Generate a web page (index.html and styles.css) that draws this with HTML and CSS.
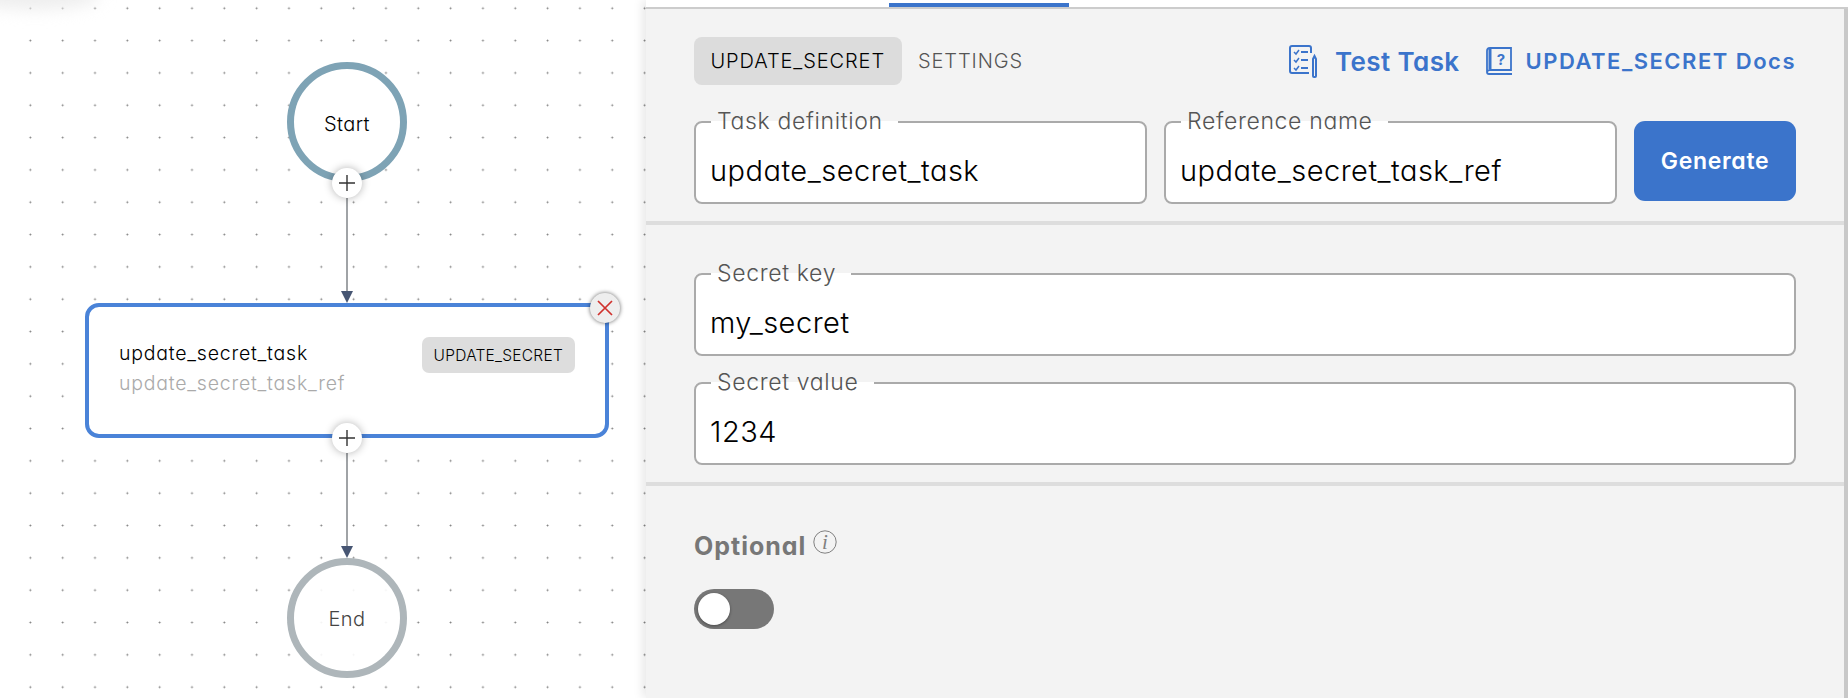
FILE: index.html
```html
<!DOCTYPE html>
<html lang="en">
<head>
<meta charset="utf-8">
<title>UPDATE_SECRET task</title>
<link rel="stylesheet" href="styles.css">
</head>
<body>
<div class="app">
  <div class="canvas">
    <div class="smudge"></div>
    <svg class="edges" width="646" height="698" viewBox="0 0 646 698">
      <line x1="347" y1="198" x2="347" y2="292" stroke="#808488" stroke-width="1.5"/>
      <polygon points="341,291 353,291 347,303" fill="#475673"/>
      <line x1="347" y1="453" x2="347" y2="547" stroke="#808488" stroke-width="1.5"/>
      <polygon points="341,546 353,546 347,558" fill="#475673"/>
    </svg>
    <div class="terminal start">Start</div>
    <div class="terminal end">End</div>
    <div class="task-node">
      <div class="task-names">
        <div class="task-name">update_secret_task</div>
        <div class="task-ref">update_secret_task_ref</div>
      </div>
      <div class="task-badge">UPDATE_SECRET</div>
    </div>
    <button class="add add-one"><svg width="16" height="16" viewBox="0 0 16 16"><path d="M8 0V16M0 8H16" stroke="#333" stroke-width="1.4" fill="none"/></svg></button>
    <button class="add add-two"><svg width="16" height="16" viewBox="0 0 16 16"><path d="M8 0V16M0 8H16" stroke="#333" stroke-width="1.4" fill="none"/></svg></button>
    <button class="remove"><svg width="16" height="16" viewBox="0 0 16 16"><path d="M1 1L15 15M15 1L1 15" stroke="#d0312d" stroke-width="1.7" fill="none"/></svg></button>
  </div>
  <main class="panel">
    <div class="panel-top"><span class="indicator"></span></div>
    <section class="section head">
      <div class="toolbar">
        <div class="tabs">
          <span class="tab active">UPDATE_SECRET</span>
          <span class="tab">SETTINGS</span>
        </div>
        <div class="links">
          <a class="test-link">
            <svg width="29" height="33" viewBox="0 0 29 33" fill="none" stroke="#3b74cb" stroke-width="2">
              <path d="M20 28H3a2 2 0 0 1-2-2V3a2 2 0 0 1 2-2h17a2 2 0 0 1 2 2v5"/>
              <path d="M5 7l2 2 3-4M5 15l2 2 3-4M5 23l2 2 3-4" stroke-width="1.5"/>
              <path d="M12 7h7M12 15h7M12 23h7" stroke-width="2"/>
              <path d="M24 14l1.5-3 1.5 3v17a1 1 0 0 1-1 1h-1a1 1 0 0 1-1-1z"/>
            </svg>
            <span>Test Task</span>
          </a>
          <a class="docs-link">
            <svg width="27" height="28" viewBox="0 0 27 28" fill="none" stroke="#3b74cb">
              <path d="M4 1H25V23H4A3 3 0 0 0 1 25V4A3 3 0 0 1 4 1Z" stroke-width="1.8"/>
              <path d="M4 1V22" stroke-width="3"/>
              <path d="M1 25a2 2 0 0 0 2 2H26" stroke-width="1.8"/>
              <text x="15" y="18" class="docs-mark">?</text>
            </svg>
            <span>UPDATE_SECRET Docs</span>
          </a>
        </div>
      </div>
      <div class="field-row">
        <fieldset class="field"><legend>Task definition</legend><div class="value">update_secret_task</div></fieldset>
        <fieldset class="field"><legend>Reference name</legend><div class="value">update_secret_task_ref</div></fieldset>
        <button class="generate">Generate</button>
      </div>
    </section>
    <section class="section secrets">
      <fieldset class="field"><legend>Secret key</legend><div class="value">my_secret</div></fieldset>
      <fieldset class="field"><legend>Secret value</legend><div class="value">1234</div></fieldset>
    </section>
    <section class="section options">
      <div class="optional-label">
        <span>Optional</span>
        <svg width="24" height="24" viewBox="0 0 24 24" fill="none"><circle cx="12" cy="12" r="11.2" stroke="#808080"/><text x="12" y="18.5" class="info-mark">i</text></svg>
      </div>
      <div class="toggle"><span class="knob"></span></div>
    </section>
  </main>
</div>
</body>
</html>
```
FILE: styles.css
```css
* { box-sizing: border-box; }
html, body { margin: 0; height: 100%; }
body {
  font-family: Inter, "Noto Sans", sans-serif;
  font-feature-settings: "cv11" 1;
  background: #fff;
  color: #000;
  overflow: hidden;
}
.app { display: flex; height: 698px; }

/* Diagram canvas */
.canvas {
  position: relative;
  width: 646px;
  flex: none;
  background-color: #fff;
  background-image: radial-gradient(circle, #7c7c7c 0.7px, transparent 1.2px);
  background-size: 32.33px 32.33px;
  background-position: 14.2px -7.9px;
  overflow: hidden;
}
.smudge {
  position: absolute;
  left: -30px;
  top: -20px;
  width: 130px;
  height: 30px;
  border-radius: 50%;
  background: #eee;
  filter: blur(8px);
}
.edges { position: absolute; left: 0; top: 0; }
.terminal {
  position: absolute;
  left: 287px;
  width: 120px;
  height: 120px;
  display: flex;
  align-items: center;
  justify-content: center;
  border-radius: 50%;
  border: 7px solid;
  background: #fff;
  font-size: 20px;
  font-weight: 350;
  letter-spacing: .02em;
}
.start { top: 62px; border-color: #7ea3b5; padding-top: 3px; }
.end { top: 558px; border-color: #aeb6ba; color: #444; background: rgba(255,255,255,.9); padding-top: 1px; }
.task-node {
  position: absolute;
  left: 85px;
  top: 303px;
  width: 524px;
  height: 135px;
  display: flex;
  justify-content: space-between;
  align-items: flex-start;
  padding: 30px 30px 0 30px;
  border: 4px solid #4a83d8;
  border-radius: 14px;
  background: #fff;
}
.task-name { font-size: 19.5px; line-height: 24px; margin-top: 4px; letter-spacing: .04em; font-weight: 350; }
.task-ref { font-size: 19.5px; line-height: 24px; margin-top: 6px; color: #aaa; letter-spacing: .04em; font-weight: 350; }
.task-badge {
  height: 36px;
  padding: 0 12px;
  display: flex;
  align-items: center;
  border-radius: 7px;
  background: #ddd;
  font-size: 15.5px;
  letter-spacing: .25px;
  font-weight: 350;
}
.add, .remove {
  position: absolute;
  width: 30px;
  height: 30px;
  padding: 0;
  display: flex;
  align-items: center;
  justify-content: center;
  border: 0;
  border-radius: 50%;
  background: #fff;
  box-shadow: 0 0 8px rgba(0,0,0,.3);
}
.add-one { left: 332px; top: 168px; }
.add-two { left: 332px; top: 423px; }
.remove { left: 590px; top: 293px; background: #eee; box-shadow: 0 0 4px rgba(0,0,0,.6); }

/* Right panel */
.panel {
  flex: 1;
  display: flex;
  flex-direction: column;
  background: #f3f3f3;
  border-right: 4px solid #c8c8c8;
  box-shadow: -3px 0 10px rgba(0,0,0,.1);
  position: relative;
}
.panel-top {
  height: 9px;
  margin-right: -4px;
  background: #fff;
  border-bottom: 2px solid #ccc;
  padding-left: 243px;
  padding-top: 3px;
}
.indicator { display: block; width: 180px; height: 4px; background: #3b74cb; }
.section { padding-left: 48px; padding-right: 48px; border-bottom: 4px solid #ddd; }
.head { height: 216px; padding-top: 28px; }
.toolbar { display: flex; justify-content: space-between; align-items: center; height: 48px; }
.tabs { display: flex; align-items: center; height: 48px; font-size: 20px; font-weight: 350; letter-spacing: .9px; }
.tab { height: 48px; display: flex; align-items: center; padding: 0 16.5px; color: #555; }
.tab.active { background: #dcdcdc; border-radius: 8px; color: #000; }
.links { display: flex; align-items: center; color: #3b74cb; font-weight: 600; }
.test-link { display: flex; align-items: center; gap: 17px; font-size: 26px; letter-spacing: .4px; margin-right: 26px; }
.docs-link { display: flex; align-items: center; gap: 13px; font-size: 22px; letter-spacing: 1.5px; }
.docs-mark { font-family: Inter, sans-serif; font-size: 15px; font-weight: 700; fill: #3b74cb; stroke: none; text-anchor: middle; letter-spacing: 0; }
.field-row { display: flex; gap: 17px; margin-top: 23px; align-items: flex-start; }
.field {
  flex: 1;
  min-width: 0;
  height: 96px;
  margin: 0;
  padding: 0 14px;
  border: 2px solid #aaa;
  border-radius: 8px;
  background: #fff;
}
.field legend {
  margin-left: 1px;
  padding: 0 15px 2px 6px;
  font-size: 23px;
  line-height: 26px;
  font-weight: 350;
  letter-spacing: .65px;
  color: #555;
}
.value { font-size: 29px; line-height: 34px; margin-top: 18px; letter-spacing: .5px; font-weight: 350; }
.generate {
  flex: none;
  width: 162px;
  height: 80px;
  margin-top: 13px;
  border: 0;
  border-radius: 11px;
  background: #3b74cb;
  color: #fff;
  font: inherit;
  font-feature-settings: inherit;
  font-size: 23px;
  font-weight: 600;
  letter-spacing: .7px;
}
.secrets { display: flex; flex-direction: column; gap: 13px; height: 261px; padding-top: 35px; }
.secrets .field { flex: none; }
.options { border-bottom: 0; padding-top: 44px; }
.optional-label { display: flex; align-items: flex-start; gap: 7px; height: 32px; font-size: 25px; line-height: 32px; font-weight: 700; letter-spacing: 1px; color: #777; }
.optional-label svg { flex: none; }
.info-mark { font-family: "Liberation Serif", serif; font-style: italic; font-size: 21px; fill: #808080; text-anchor: middle; font-weight: 400; letter-spacing: 0; }
.toggle {
  width: 80px;
  height: 40px;
  margin-top: 27px;
  padding: 4px;
  border-radius: 20px;
  background: #777;
}
.knob {
  display: block;
  width: 32px;
  height: 32px;
  border-radius: 50%;
  background: #fff;
  box-shadow: 0 1px 3px rgba(0,0,0,.4);
}
```
